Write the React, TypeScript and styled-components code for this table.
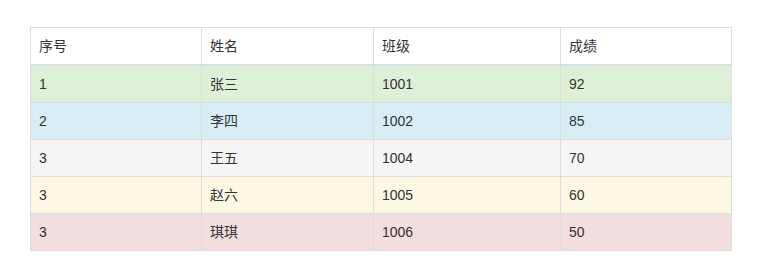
import React from 'react'
import styled, { createGlobalStyle } from 'styled-components'

type Tone = 'success' | 'info' | 'active' | 'warning' | 'danger'

const tones: Record<Tone, string> = {
  success: '#dff0d8',
  info: '#d9edf7',
  active: '#f5f5f5',
  warning: '#fcf8e3',
  danger: '#f2dede',
}

const rows: { id: string; name: string; klass: string; score: string; tone: Tone }[] = [
  { id: '1', name: '张三', klass: '1001', score: '92', tone: 'success' },
  { id: '2', name: '李四', klass: '1002', score: '85', tone: 'info' },
  { id: '3', name: '王五', klass: '1004', score: '70', tone: 'active' },
  { id: '3', name: '赵六', klass: '1005', score: '60', tone: 'warning' },
  { id: '3', name: '琪琪', klass: '1006', score: '50', tone: 'danger' },
]

const App: React.FC = () => {
  return (
    <>
      <GlobalStyle />
      <Page>
        <Table>
          <colgroup>
            <col style={{ width: 171 }} />
            <col style={{ width: 172 }} />
            <col style={{ width: 187 }} />
            <col style={{ width: 171 }} />
          </colgroup>
          <thead>
            <tr>
              <Th>序号</Th>
              <Th>姓名</Th>
              <Th>班级</Th>
              <Th>成绩</Th>
            </tr>
          </thead>
          <tbody>
            {rows.map((r) => (
              <Row key={r.name} tone={r.tone}>
                <Td>{r.id}</Td>
                <Td>{r.name}</Td>
                <Td>{r.klass}</Td>
                <Td>{r.score}</Td>
              </Row>
            ))}
          </tbody>
        </Table>
      </Page>
    </>
  )
}

const GlobalStyle = createGlobalStyle`
  body {
    margin: 0;
    background: #fff;
    font-family: "Liberation Sans", Arial, "Noto Sans CJK SC", sans-serif;
    font-size: 14px;
    line-height: 20px;
    color: #333;
  }
`

const Page = styled.div`
  padding: 27px 32px 0 30px;
`

const Table = styled.table`
  width: 701px;
  border-collapse: collapse;
  border-spacing: 0;
  border: 1px solid #ddd;
  table-layout: fixed;
`

const Th = styled.th`
  text-align: left;
  font-weight: normal;
  padding: 8px;
  line-height: 20px;
  border: 1px solid #ddd;
  border-bottom: 2px solid #ddd;
  vertical-align: bottom;
`

const Row = styled.tr<{ tone: Tone }>`
  background-color: ${(p) => tones[p.tone]};
`

const Td = styled.td`
  padding: 8px;
  line-height: 20px;
  border: 1px solid #ddd;
  vertical-align: top;
`

export default App
